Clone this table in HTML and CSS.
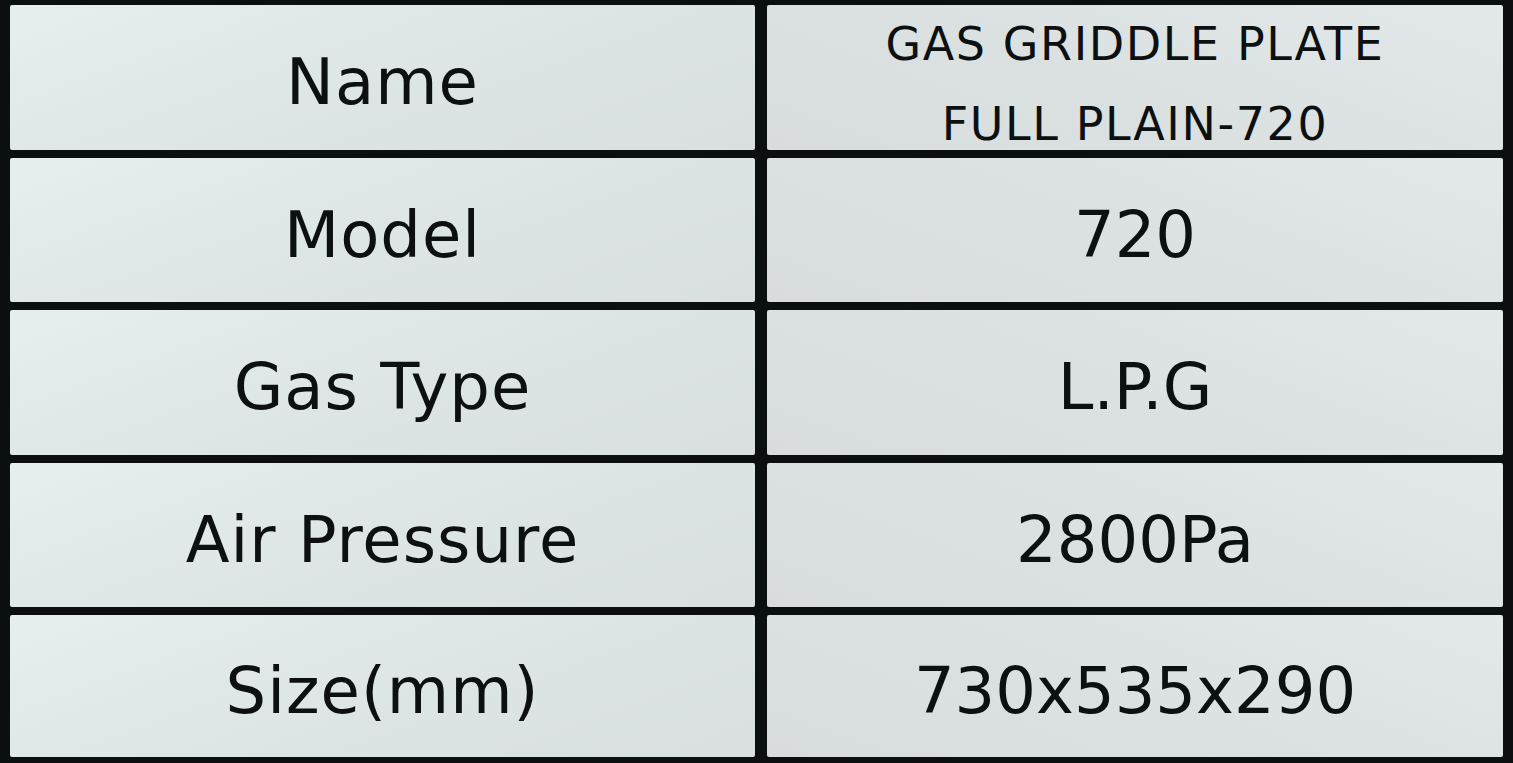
FILE: index.html
```html
<!DOCTYPE html>
<html lang="en">
<head>
<meta charset="utf-8">
<title>Gas Griddle Plate</title>
<link rel="stylesheet" href="styles.css">
</head>
<body>
<div class="table">
  <div class="cell label">Name</div>
  <div class="cell value small"><span>GAS GRIDDLE PLATE</span><span>FULL PLAIN-720</span></div>
  <div class="cell label">Model</div>
  <div class="cell value">720</div>
  <div class="cell label">Gas Type</div>
  <div class="cell value">L.P.G</div>
  <div class="cell label">Air Pressure</div>
  <div class="cell value">2800Pa</div>
  <div class="cell label">Size(mm)</div>
  <div class="cell value">730x535x290</div>
</div>
</body>
</html>
```
FILE: styles.css
```css
html, body {
  margin: 0;
  padding: 0;
  background: #0c0f0f;
  width: 1513px;
  height: 763px;
  overflow: hidden;
}
.table {
  display: grid;
  grid-template-columns: 745px 736px;
  grid-template-rows: 145px 144px 145px 144px 142px;
  column-gap: 12px;
  row-gap: 8px;
  padding: 5px 10px 6px 10px;
  width: 1513px;
  height: 763px;
  box-sizing: border-box;
}
.cell {
  display: flex;
  flex-direction: column;
  align-items: center;
  justify-content: center;
  padding-top: 9px;
  box-sizing: border-box;
  color: #0d1010;
  font-family: "DejaVu Sans", "Liberation Sans", sans-serif;
  font-size: 64px;
  letter-spacing: 1px;
  border-radius: 2px;
}
.label {
  background: linear-gradient(160deg, #e6eeef 0%, #dde5e6 50%, #d9dfe0 100%);
}
.value {
  background: linear-gradient(200deg, #e3e9ea 0%, #dbe1e1 55%, #d8dcdc 100%);
  letter-spacing: 0;
}
.small {
  font-size: 46px;
  line-height: 80px;
  letter-spacing: 1.6px;
  padding-top: 12px;
}
```
